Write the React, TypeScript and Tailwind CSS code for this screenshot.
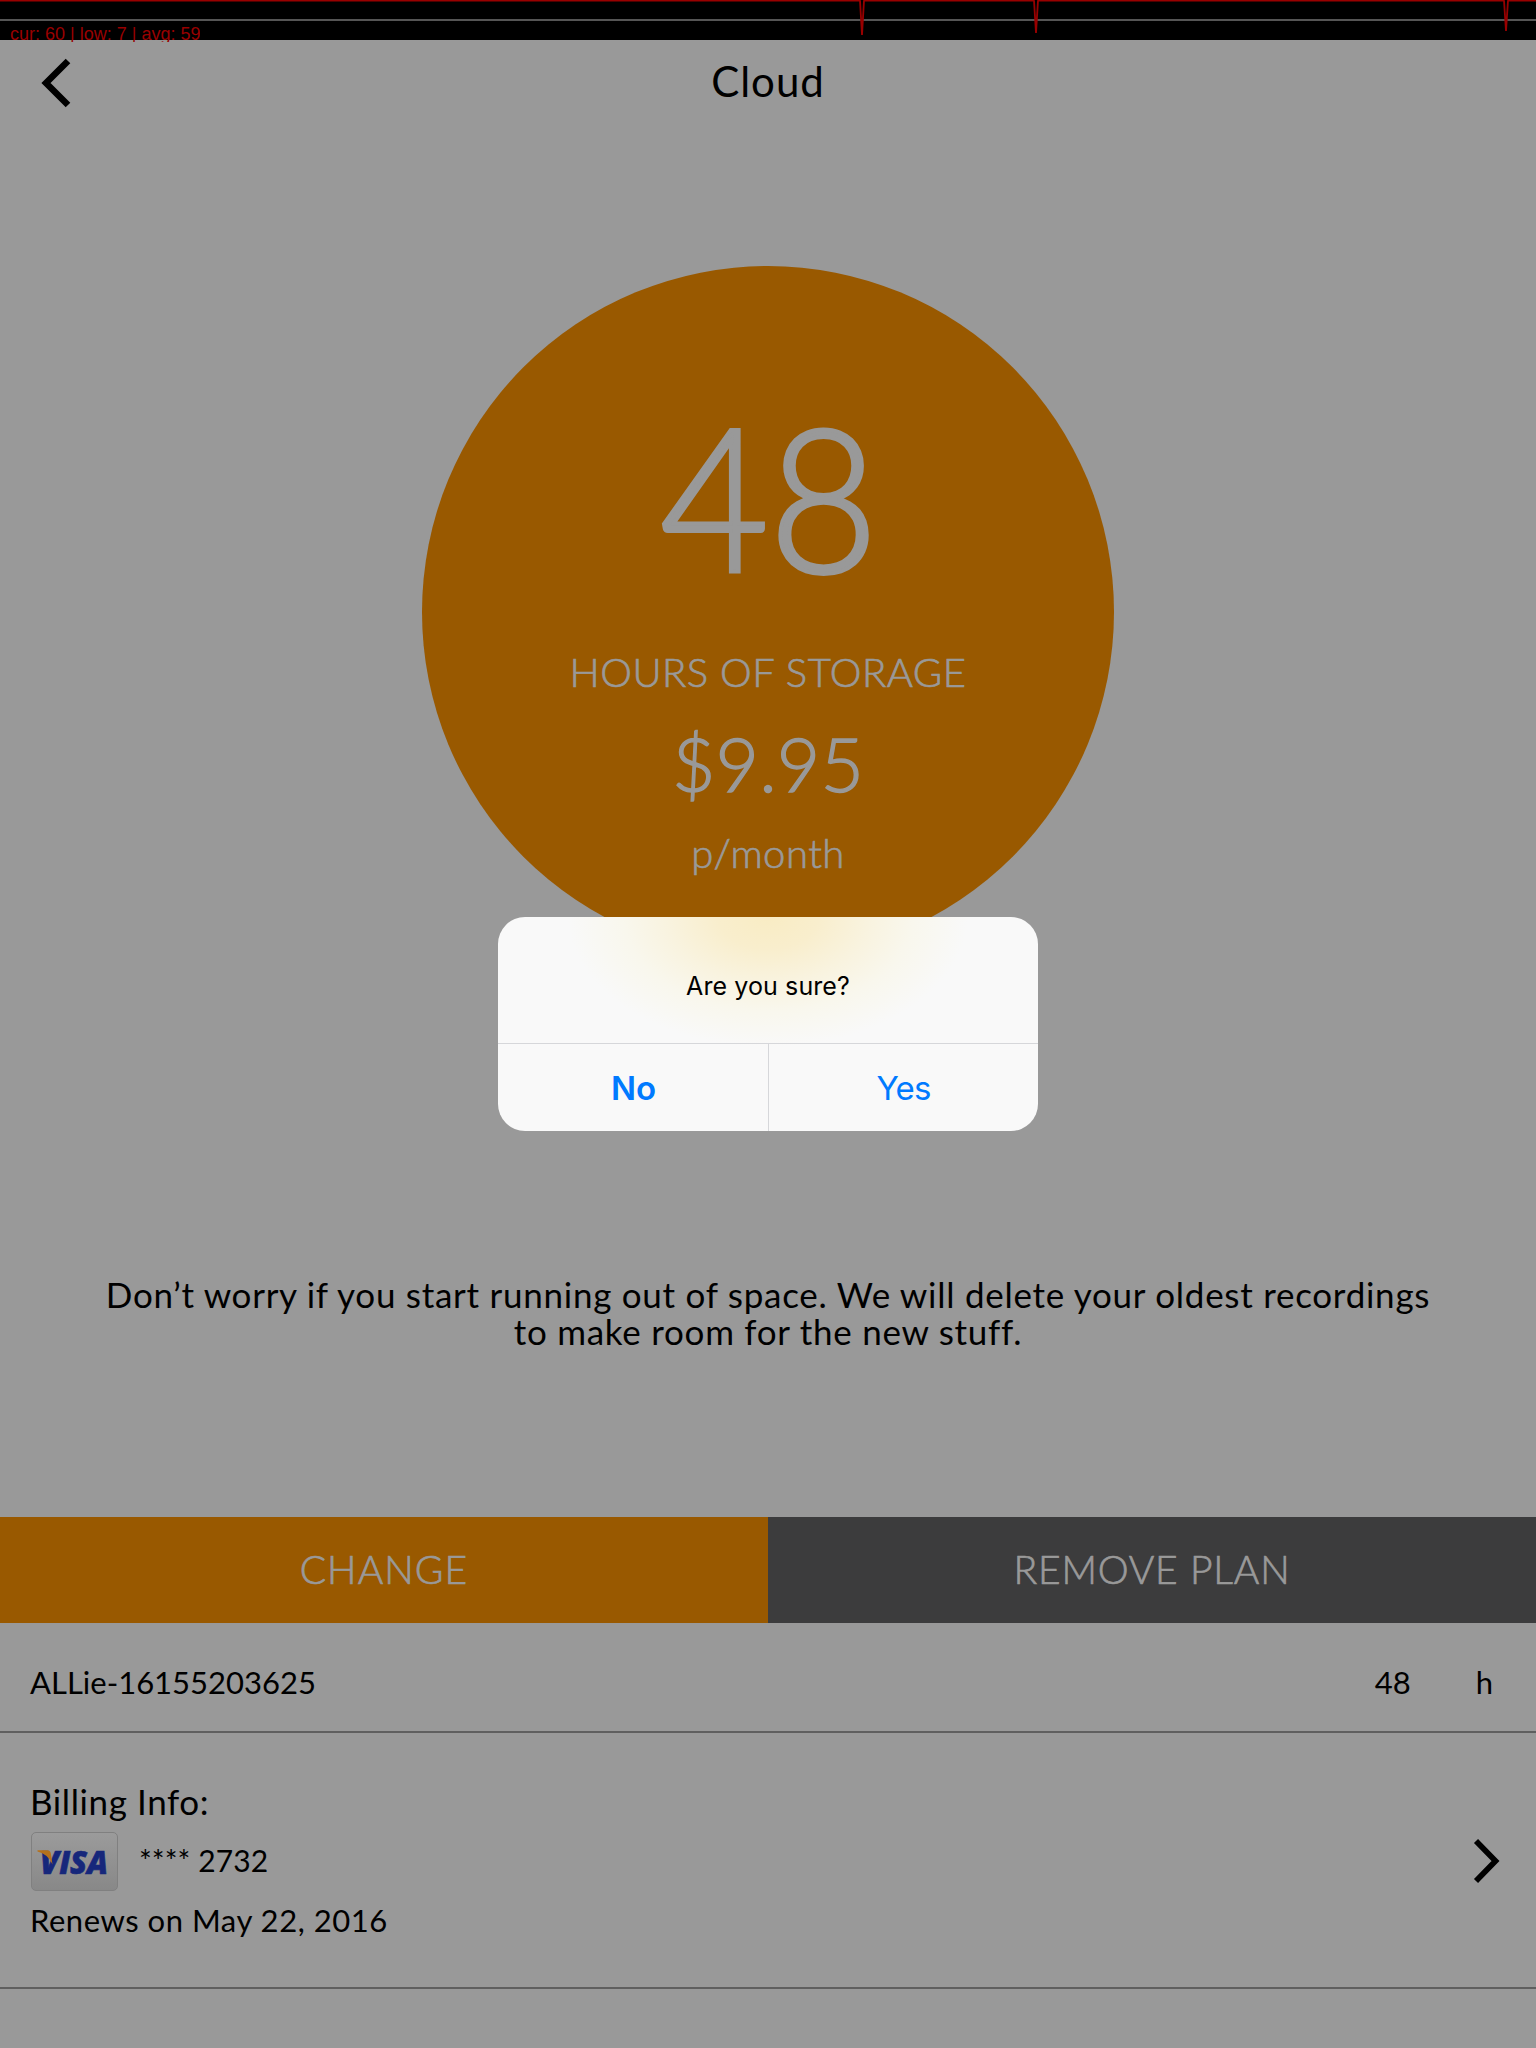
function PerformanceBar() {
  return (
    <div className="relative h-10 bg-black">
      <svg className="absolute inset-0" width="1536" height="40" fill="none">
        <path d="M0 20H1536" stroke="#555555" strokeWidth="2" />
        <path
          d="M0 .5H860L862 35L864 .5H1034L1036 33L1038 .5H1504L1506 31L1508 .5H1536"
          stroke="#990000"
          strokeWidth="1.8"
          strokeLinejoin="bevel"
        />
      </svg>
      <div className="absolute left-[10px] top-[22px] h-5 overflow-hidden whitespace-nowrap font-['Liberation_Sans',sans-serif] text-[18px] leading-[25px] text-[#990000]">
        cur: 60 | low: 7 | avg: 59
      </div>
    </div>
  );
}

function VisaCard() {
  return (
    <div className="flex h-[59px] w-[87px] items-center justify-center rounded-[5px] border border-[#808080] bg-linear-to-b from-[#9b9b9b] to-[#888888]">
      <svg width="85" height="57" viewBox="0 0 85 57">
        <text
          x="8"
          y="40.500"
          textLength="68"
          lengthAdjust="spacingAndGlyphs"
          fill="#16277b"
          stroke="#16277b"
          strokeWidth="0.6"
          fontFamily="'Open Sans', sans-serif"
          fontWeight="800"
          fontStyle="italic"
          fontSize="31"
        >
          VISA
        </text>
        <path d="M5.500 17.300H15Q18.300 17.300 18.800 20.500L20.500 31.500Q16 21 5.500 18.500Z" fill="#b5711c" />
      </svg>
    </div>
  );
}

function ConfirmDialog() {
  return (
    <div className="absolute inset-0 flex items-center justify-center">
      <div className="flex h-[214px] w-[540px] flex-col overflow-hidden rounded-[27px] bg-[#f9f9f9] bg-[radial-gradient(ellipse_200px_130px_at_50%_0%,#f9ecc4_0%,#f9eecd_25%,#f9f3df_50%,#f9f7ed_72%,#f9f9f900_100%)] font-[Inter,sans-serif]">
        <div className="flex h-[127px] items-center justify-center border-b border-[#d6d7da] pt-3">
          <p className="text-[25px] leading-8 tracking-[0.1px] text-black">Are you sure?</p>
        </div>
        <div className="grid flex-1 grid-cols-2 text-[33px] text-[#007aff]">
          <button className="pl-px pt-[2px] font-semibold">No</button>
          <button className="border-l border-[#d6d7da] pt-[2px] tracking-[-0.9px]">Yes</button>
        </div>
      </div>
    </div>
  );
}

export default function App() {
  return (
    <div className="relative h-[2048px] w-[1536px] overflow-hidden bg-[#999999] font-[Lato,sans-serif] text-black">
      <PerformanceBar />

      <header className="grid h-20 grid-cols-[1fr_auto_1fr] items-center">
        <svg className="ml-[41px] mt-[6px]" width="32" height="50" viewBox="0 0 32 50" fill="none">
          <path d="M27 3L5 25L27 47" stroke="black" strokeWidth="6.5" />
        </svg>
        <h1 className="pt-[2px] text-[42px] leading-[50px] tracking-[1px]">Cloud</h1>
      </header>

      <section className="mx-auto mt-[146px] flex size-[692px] flex-col items-center rounded-full bg-[#995900] pt-[129px] font-light text-[#999999]">
        <div className="ml-[2px] scale-x-[0.94] text-[200px] leading-[200px] [-webkit-text-stroke:4px_#999999]">48</div>
        <div className="mt-[53px] text-[40px] leading-[48px] tracking-[0.5px] [-webkit-text-stroke:0.7px_#999999]">
          HOURS OF STORAGE
        </div>
        <div className="mt-[27px] text-[75px] leading-[80px] tracking-[0.1px] [-webkit-text-stroke:1.4px_#999999]">
          $9.95
        </div>
        <div className="mt-[26px] text-[40px] leading-[48px] tracking-[0.5px] [-webkit-text-stroke:0.7px_#999999]">
          p/month
        </div>
      </section>

      <p className="mt-[318px] text-center text-[35px] leading-[37px] tracking-[0.73px]">
        Don’t worry if you start running out of space. We will delete your oldest recordings
        <br />
        to make room for the new stuff.
      </p>

      <div className="mt-[167px] grid h-[106px] grid-cols-2 text-[39px] font-light text-[#999999] [-webkit-text-stroke:0.7px_#999999]">
        <button className="bg-[#995900] pb-[2px] tracking-[1.1px]">CHANGE</button>
        <button className="bg-[#3c3c3d] pb-[2px] tracking-[0.8px]">REMOVE PLAN</button>
      </div>

      <div className="flex h-[110px] items-center border-b-2 border-[#5f5f5f] pl-[30px] pr-[43px] pt-[10px] text-[31px]">
        <span>ALLie-16155203625</span>
        <span className="ml-auto">48</span>
        <span className="ml-[65px]">h</span>
      </div>

      <div className="flex h-64 items-center justify-between border-b-2 border-[#5f5f5f] pl-[30px] pr-[34px]">
        <div>
          <div className="text-[35px] leading-[40px] tracking-[0.6px]">Billing Info:</div>
          <div className="mt-[11px] flex items-center pl-px text-[30px] leading-9">
            <VisaCard />
            <span className="ml-[21px] -mt-[3px] tracking-[0.1px]">**** 2732</span>
          </div>
          <div className="mt-[10px] text-[31px] leading-[38px] tracking-[0.53px]">Renews on May 22, 2016</div>
        </div>
        <svg className="mt-[2px]" width="30" height="48" viewBox="0 0 30 48" fill="none">
          <path d="M4 4L23.500 24L4 44" stroke="black" strokeWidth="5.7" />
        </svg>
      </div>

      <ConfirmDialog />
    </div>
  );
}
